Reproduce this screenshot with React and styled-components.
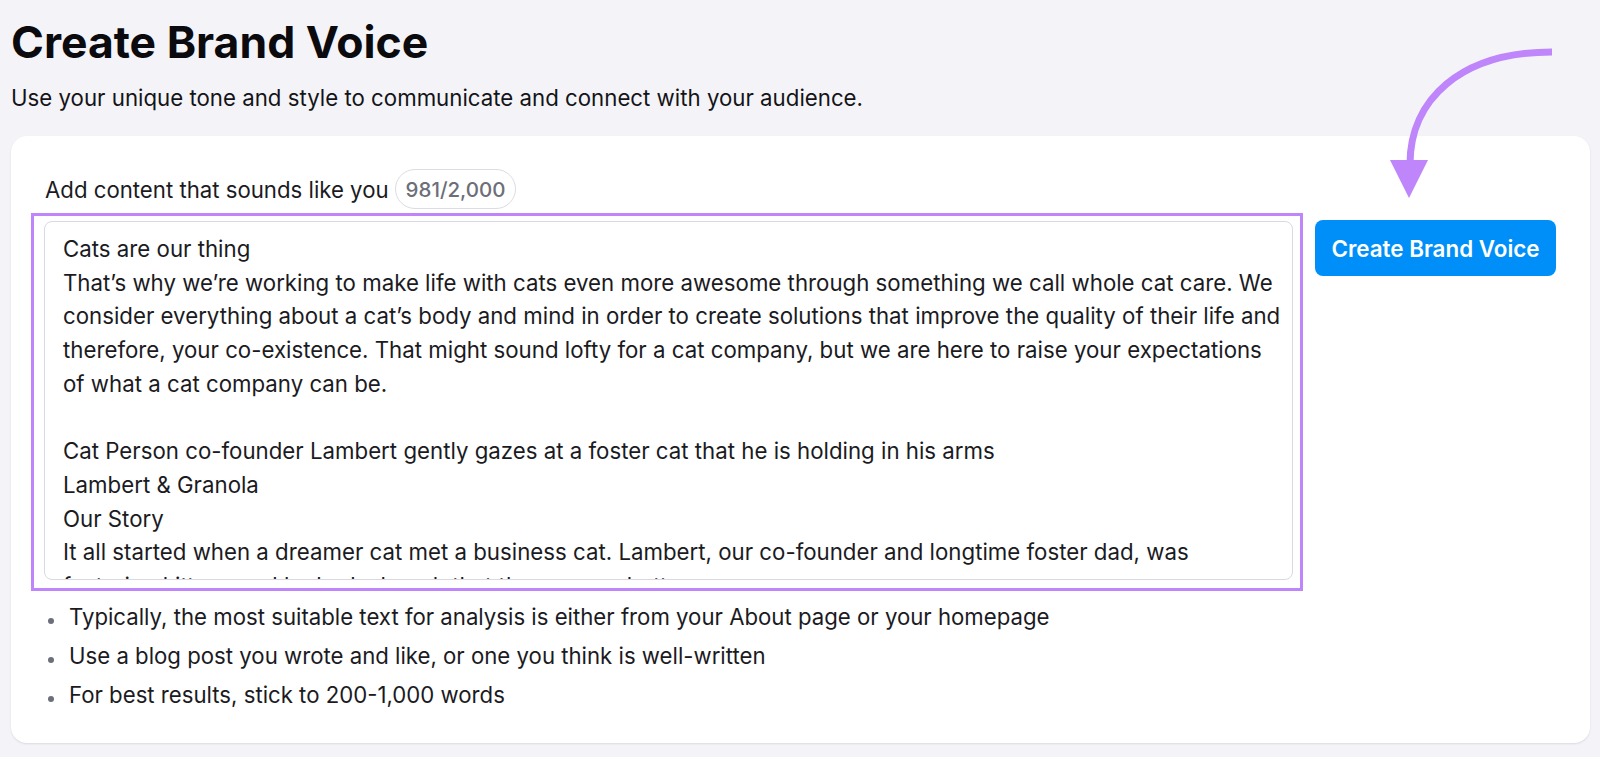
import styled, { createGlobalStyle } from "styled-components";

const GlobalStyle = createGlobalStyle`
  html, body {
    margin: 0;
    background: #f4f4f8;
  }
  body {
    font-family: Inter, "Noto Sans", sans-serif;
    color: #1b1b1f;
  }
`;

const Page = styled.div`
  position: relative;
  min-height: 757px;
  box-sizing: border-box;
  padding: 18px 10px 14px 11px;
`;

const Title = styled.h1`
  margin: 0;
  font-size: 44.5px;
  line-height: 48px;
  font-weight: 700;
  color: #0b0b0f;
`;

const SubTitle = styled.p`
  margin: 18px 0 0;
  font-size: 22.25px;
  line-height: 28px;
  color: #141418;
`;

const Card = styled.section`
  margin-top: 24px;
  background: #fff;
  border-radius: 16px;
  padding: 33px 34px 29px 20px;
  box-shadow: 0 1px 2px rgba(30, 32, 48, 0.12);
`;

const LabelRow = styled.div`
  display: flex;
  align-items: center;
  gap: 6px;
  height: 40px;
  padding-left: 14px;
  font-size: 22.2px;
  color: #1b1b1f;
`;

const Counter = styled.span`
  box-sizing: border-box;
  height: 40px;
  display: inline-flex;
  align-items: center;
  padding: 0 10px;
  border: 1px solid #dcdde4;
  border-radius: 20px;
  font-size: 20.5px;
  font-weight: 500;
  color: #6c6e79;
`;

const InputRow = styled.div`
  display: flex;
  align-items: flex-start;
  gap: 12px;
  margin-top: 4px;
`;

const Highlight = styled.div`
  flex: 1;
  border: 3px solid #be86fa;
  padding: 5px 7px 8px 10px;
`;

const ContentArea = styled.textarea`
  display: block;
  width: 100%;
  height: 359px;
  box-sizing: border-box;
  margin: 0;
  padding: 10px 18px;
  border: 1px solid #d9dae1;
  border-radius: 8px;
  background: #fff;
  font-family: Inter, "Noto Sans", sans-serif;
  font-size: 22.25px;
  line-height: 33.7px;
  color: #1b1b1f;
  white-space: pre;
  overflow: hidden;
  resize: none;
  outline: none;
`;

const CreateButton = styled.button`
  flex: none;
  margin-top: 7px;
  width: 241px;
  height: 56px;
  border: none;
  border-radius: 8px;
  background: #008ff8;
  color: #fff;
  font-family: Inter, "Noto Sans", sans-serif;
  font-size: 22.4px;
  font-weight: 600;
  cursor: pointer;
`;

const Tips = styled.ul`
  list-style: none;
  margin: 6px 0 0;
  padding: 0 0 0 17px;
`;

const Tip = styled.li`
  display: flex;
  align-items: center;
  height: 39px;
  font-size: 22.2px;
  color: #1b1b1f;

  &::before {
    content: "";
    flex: none;
    width: 6px;
    height: 6px;
    margin: 8px 15px 0 0;
    border-radius: 50%;
    background: #6c6e79;
  }
`;

const Arrow = styled.svg`
  position: absolute;
  left: 1380px;
  top: 40px;
  pointer-events: none;
`;

const content = [
  "Cats are our thing",
  "That\u2019s why we\u2019re working to make life with cats even more awesome through something we call whole cat care. We",
  "consider everything about a cat\u2019s body and mind in order to create solutions that improve the quality of their life and",
  "therefore, your co-existence. That might sound lofty for a cat company, but we are here to raise your expectations",
  "of what a cat company can be.",
  "",
  "Cat Person co-founder Lambert gently gazes at a foster cat that he is holding in his arms",
  "Lambert & Granola",
  "Our Story",
  "It all started when a dreamer cat met a business cat. Lambert, our co-founder and longtime foster dad, was",
  "fostering kittens and he had a hunch that there was a better way.",
].join("\n");

const tips = [
  "Typically, the most suitable text for analysis is either from your About page or your homepage",
  "Use a blog post you wrote and like, or one you think is well-written",
  "For best results, stick to 200-1,000 words",
];

export default function App() {
  return (
    <>
      <GlobalStyle />
      <Page>
        <Title>Create Brand Voice</Title>
        <SubTitle>Use your unique tone and style to communicate and connect with your audience.</SubTitle>
        <Card>
          <LabelRow>
            Add content that sounds like you
            <Counter>981/2,000</Counter>
          </LabelRow>
          <InputRow>
            <Highlight>
              <ContentArea readOnly defaultValue={content} />
            </Highlight>
            <CreateButton>Create Brand Voice</CreateButton>
          </InputRow>
          <Tips>
            {tips.map((tip) => (
              <Tip key={tip}>{tip}</Tip>
            ))}
          </Tips>
        </Card>
        <Arrow width="185" height="165" viewBox="0 0 185 165">
          <path d="M172 12 C80 12 30 60 30 124" fill="none" stroke="#be86fa" strokeWidth="7" />
          <polygon points="10,120 48,120 29,158" fill="#be86fa" />
        </Arrow>
      </Page>
    </>
  );
}
